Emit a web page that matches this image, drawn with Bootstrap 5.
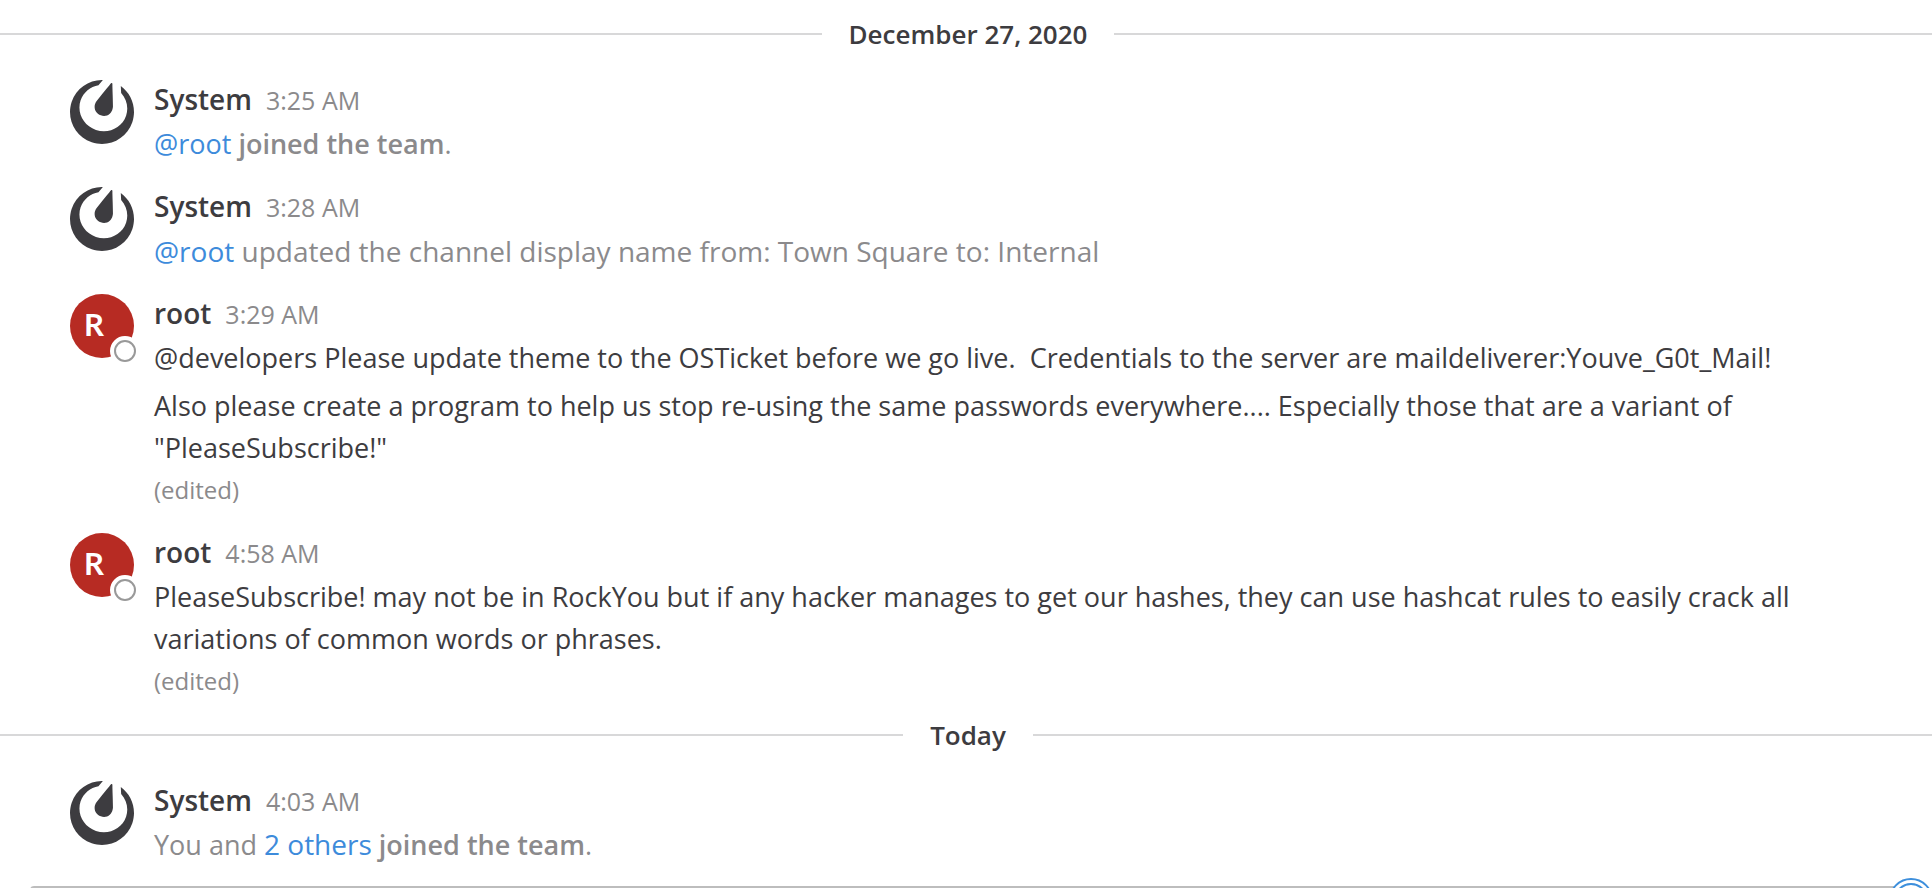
<!DOCTYPE html>
<html lang="en">
<head>
<meta charset="utf-8">
<meta name="viewport" content="width=device-width, initial-scale=1">
<title>Internal</title>
<link href="https://cdn.jsdelivr.net/npm/bootstrap@5.3.0/dist/css/bootstrap.min.css" rel="stylesheet">
<style>
  body { font-family: "Open Sans", sans-serif; font-size: 27px; line-height: 42px; color: #3d3c40; background: #fff; }
  a { color: #3d8bdb; text-decoration: none; }
  .channel { height: 100vh; padding-top: 13px; }
  .day { font-size: 26px; line-height: 42px; gap: 27px; margin-right: -4px; }
  .day::before, .day::after { content: ""; flex: 1; height: 2px; background: #d8d8d9; }
  .feed { padding: 25px 100px 0 70px; }
  .post { gap: 20px; padding-bottom: 22px; }
  .post:last-child { padding-bottom: 12px; }
  .avatar { width: 64px; height: 64px; }
  .initial { background: #b72b23; color: #fff; font: 700 31px/60px Lato, sans-serif; padding-right: 16px; }
  .presence { right: -6px; bottom: -8px; width: 30px; height: 30px; border: 4px solid #fff; background: #fff; }
  .presence::after { content: ""; display: block; width: 22px; height: 22px; border: 2px solid #999; border-radius: 50%; }
  .post-head { gap: 14px; height: 43px; line-height: 38px; font-size: 28px; }
  .meta { font-size: 25px; color: #8b8a8c; }
  .edited { font-size: 24px; color: #8b8a8c; }
  .notice { color: #8b8a8c; }
  .wide { font-size: 28px; }
  a.wide { line-height: 40px; }
  .semi { font-weight: 600; }
  .post-body p { margin-bottom: 6px; }
  .post-body p:last-of-type { margin-bottom: 0; }
  .composer { margin: 8px 14px 0 30px; }
  .composer textarea { height: 90px; border: 2px solid #bdbdbd; border-radius: 4px; resize: none; }
  .help { right: -15px; top: -8px; width: 44px; height: 44px; }
</style>
</head>
<body>
<svg class="d-none" aria-hidden="true">
  <symbol id="system-logo" viewBox="0 0 24 24"><path fill="#3d3c40" d="M12.081 0C7.048-.034 2.339 3.125.637 8.153c-2.125 6.276 1.24 13.086 7.516 15.21 6.276 2.125 13.086-1.24 15.21-7.516 1.727-5.1-.172-10.552-4.311-13.557l.126 2.547c2.065 2.282 2.88 5.512 1.852 8.549-1.534 4.532-6.594 6.915-11.3 5.321-4.708-1.593-7.28-6.559-5.745-11.092 1.031-3.046 3.655-5.121 6.694-5.67l1.642-1.94A4.87 4.87 0 0 0 12.08 0zm3.528 1.094a.284.284 0 0 0-.123.024l-.004.001a.33.33 0 0 0-.109.071c-.145.142-.657.828-.657.828L13.6 3.4l-1.3 1.585-2.232 2.776s-1.024 1.278-.798 2.851c.226 1.574 1.396 2.34 2.304 2.648.907.307 2.302.408 3.438-.704 1.135-1.112 1.098-2.75 1.098-2.75l-.087-3.56-.07-2.05-.047-1.775s.01-.856-.02-1.057a.33.33 0 0 0-.035-.107l-.006-.012-.007-.011a.277.277 0 0 0-.229-.14z"/></symbol>
</svg>
<main class="channel overflow-hidden">
  <div class="day d-flex align-items-center semi"><span>December 27, 2020</span></div>
  <section class="feed">
    <article class="post d-flex">
      <svg class="avatar flex-shrink-0"><use href="#system-logo"/></svg>
      <div class="post-body">
        <div class="post-head d-flex align-items-baseline"><span class="semi">System</span><time class="meta">3:25 AM</time></div>
        <p class="notice"><a href="#">@root</a> <span class="semi">joined the team</span>.</p>
      </div>
    </article>
    <article class="post d-flex">
      <svg class="avatar flex-shrink-0"><use href="#system-logo"/></svg>
      <div class="post-body">
        <div class="post-head d-flex align-items-baseline"><span class="semi">System</span><time class="meta">3:28 AM</time></div>
        <p class="notice wide"><a href="#">@root</a> updated the channel display name from: Town Square to: Internal</p>
      </div>
    </article>
    <article class="post d-flex">
      <div class="avatar initial rounded-circle flex-shrink-0 position-relative text-center">R<span class="presence position-absolute rounded-circle"></span></div>
      <div class="post-body">
        <div class="post-head d-flex align-items-baseline"><span class="semi">root</span><time class="meta">3:29 AM</time></div>
        <p>@developers Please update theme to the OSTicket before we go live.&nbsp; Credentials to the server are maildeliverer:Youve_G0t_Mail!</p>
        <p>Also please create a program to help us stop re-using the same passwords everywhere.... Especially those that are a variant of "PleaseSubscribe!"</p>
        <div class="edited">(edited)</div>
      </div>
    </article>
    <article class="post d-flex">
      <div class="avatar initial rounded-circle flex-shrink-0 position-relative text-center">R<span class="presence position-absolute rounded-circle"></span></div>
      <div class="post-body">
        <div class="post-head d-flex align-items-baseline"><span class="semi">root</span><time class="meta">4:58 AM</time></div>
        <p>PleaseSubscribe! may not be in RockYou but if any hacker manages to get our hashes, they can use hashcat rules to easily crack all variations of common words or phrases.</p>
        <div class="edited">(edited)</div>
      </div>
    </article>
  </section>
  <div class="day d-flex align-items-center semi"><span>Today</span></div>
  <section class="feed">
    <article class="post d-flex">
      <svg class="avatar flex-shrink-0"><use href="#system-logo"/></svg>
      <div class="post-body">
        <div class="post-head d-flex align-items-baseline"><span class="semi">System</span><time class="meta">4:03 AM</time></div>
        <p class="notice">You and <a class="wide" href="#">2 others</a> <span class="semi">joined the team</span>.</p>
      </div>
    </article>
  </section>
  <form class="composer position-relative">
    <textarea class="d-block w-100" aria-label="Write to Internal"></textarea>
    <svg class="help position-absolute" viewBox="0 0 44 44" fill="none" stroke="#3d8fdc" stroke-width="2" aria-hidden="true"><circle cx="22" cy="22" r="21" fill="#fff"/><circle cx="22" cy="22" r="16"/></svg>
  </form>
</main>
<script src="https://cdn.jsdelivr.net/npm/bootstrap@5.3.0/dist/js/bootstrap.bundle.min.js"></script>
</body>
</html>
